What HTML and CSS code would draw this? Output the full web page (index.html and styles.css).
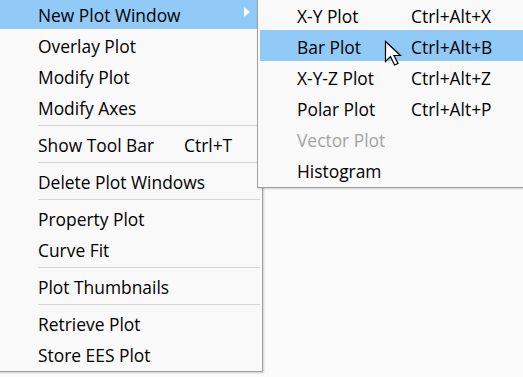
FILE: index.html
```html
<!DOCTYPE html>
<html lang="en">
<head>
  <meta charset="UTF-8" />
  <meta name="viewport" content="width=device-width, initial-scale=1.0"/>
  <title>Plot Menu</title>
  <link rel="stylesheet" href="styles.css">
</head>
<body>

  <div class="desk">
    <div class="menu main-menu">
      <div class="item active"><span class="label">New Plot Window</span><span class="arrow"></span></div>
      <div class="item"><span class="label">Overlay Plot</span></div>
      <div class="item"><span class="label">Modify Plot</span></div>
      <div class="item"><span class="label">Modify Axes</span></div>
      <div class="sep"></div>
      <div class="item"><span class="label">Show Tool Bar</span><span class="key">Ctrl+T</span></div>
      <div class="sep"></div>
      <div class="item"><span class="label">Delete Plot Windows</span></div>
      <div class="sep"></div>
      <div class="item"><span class="label">Property Plot</span></div>
      <div class="item"><span class="label">Curve Fit</span></div>
      <div class="sep"></div>
      <div class="item"><span class="label">Plot Thumbnails</span></div>
      <div class="sep"></div>
      <div class="item"><span class="label">Retrieve Plot</span></div>
      <div class="item"><span class="label">Store EES Plot</span></div>
    </div>

    <div class="menu sub-menu">
      <div class="item"><span class="label">X-Y Plot</span><span class="key">Ctrl+Alt+X</span></div>
      <div class="item active"><span class="label">Bar Plot</span><span class="key">Ctrl+Alt+B</span></div>
      <div class="item"><span class="label">X-Y-Z Plot</span><span class="key">Ctrl+Alt+Z</span></div>
      <div class="item"><span class="label">Polar Plot</span><span class="key">Ctrl+Alt+P</span></div>
      <div class="item disabled"><span class="label">Vector Plot</span></div>
      <div class="item"><span class="label">Histogram</span></div>
    </div>

    <svg class="cursor" width="20" height="28" viewBox="0 0 20 28">
      <path d="M1.5 1.5 L1.5 21.5 L6.5 16.5 L10.5 25 L14 23.5 L10 15.5 L16.5 15.5 Z" fill="#fff" stroke="#000" stroke-width="1.2" stroke-linejoin="miter"/>
    </svg>
  </div>

</body>
</html>
```

FILE: styles.css
```css
body {
  margin: 0;
  background: #fbfbfb;
  font-family: 'Open Sans', 'Noto Sans', sans-serif;
  font-size: 17.4px;
  color: #000;
  overflow: hidden;
}

.desk {
  position: relative;
  width: 523px;
  height: 377px;
  overflow: hidden;
}

.menu {
  background: #f9f9f9;
  border: 1px solid #a0a0a0;
  padding: 2px 0;
  box-sizing: border-box;
  display: flex;
  flex-direction: column;
  box-shadow: 1px 1px 2px rgba(0,0,0,0.18);
}

.main-menu {
  width: 266px;
  margin-top: -5px;
  margin-left: -3px;
  padding-left: 2px;
  padding-right: 2px;
}

.item {
  height: 31px;
  box-sizing: border-box;
  padding-top: 2px;
  display: flex;
  align-items: center;
  white-space: nowrap;
}

.main-menu .item {
  padding-left: 38px;
  padding-right: 10px;
}

.main-menu .label {
  width: 146px;
}

.item.active {
  background: #91c9f7;
}

.item.disabled {
  color: #a3a3a3;
}

.arrow {
  margin-left: auto;
  width: 0;
  height: 0;
  border-left: 6px solid #fff;
  border-top: 5.5px solid transparent;
  border-bottom: 5.5px solid transparent;
  margin-top: -5px;
}

.sep {
  height: 1px;
  background: #d5d5d5;
  margin: 3px 0 2px 38px;
}

.sub-menu {
  position: absolute;
  top: -4px;
  left: 257px;
  width: 290px;
  padding-left: 2px;
}

.sub-menu .item {
  padding-left: 37px;
}

.sub-menu .label {
  width: 114px;
}

.cursor {
  position: absolute;
  left: 384px;
  top: 40px;
}
```
